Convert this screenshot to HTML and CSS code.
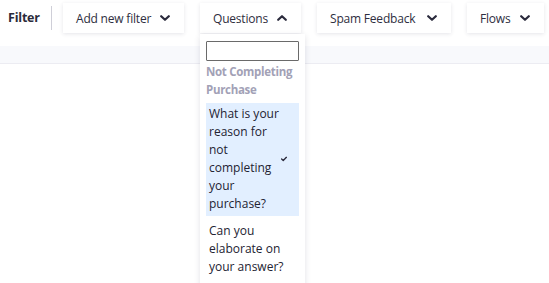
FILE: index.html
```html
<!DOCTYPE html>
<html>
<head>
<meta charset="utf-8">
<link rel="stylesheet" href="styles.css">
</head>
<body>
<div class="page">
  <div class="toolbar">
    <span class="label">Filter</span>
    <span class="divider"></span>
    <div class="btn w1"><span>Add new filter</span><svg class="chev" viewBox="0 0 10 6"><path d="M1.2 1.2 L5 4.8 L8.8 1.2"/></svg></div>
    <div class="btn w2 open"><span>Questions</span><svg class="chev" viewBox="0 0 10 6"><path d="M1.2 4.8 L5 1.2 L8.8 4.8"/></svg>
      <div class="menu">
        <input class="search" type="text">
        <div class="group">Not Completing Purchase</div>
        <div class="item selected"><span class="txt">What is your reason for not completing your purchase?</span><svg class="check" viewBox="0 0 8 6"><path d="M0.8 3 L3 5 L7.2 0.8"/></svg></div>
        <div class="item plain"><span class="txt">Can you elaborate on your answer?</span></div>
      </div>
    </div>
    <div class="btn w3"><span>Spam Feedback</span><svg class="chev" viewBox="0 0 10 6"><path d="M1.2 1.2 L5 4.8 L8.8 1.2"/></svg></div>
    <div class="btn w4"><span>Flows</span><svg class="chev" viewBox="0 0 10 6"><path d="M1.2 1.2 L5 4.8 L8.8 1.2"/></svg></div>
  </div>
  <div class="band"></div>
</div>
</body>
</html>
```
FILE: styles.css
```css
* { box-sizing: border-box; }
html, body { margin: 0; padding: 0; background: #fff; }
body { font-family: "Open Sans", "Liberation Sans", sans-serif; color: #2a2a3c; font-size: 12px; }
.page { width: 549px; height: 283px; overflow: hidden; }
.toolbar { display: flex; align-items: flex-start; padding: 3px 0 0 8px; height: 46px; }
.label { width: 43px; flex: 0 0 43px; font-weight: 700; font-size: 12.5px; line-height: 30px; color: #2b2b3a; letter-spacing: -0.2px; }
.divider { width: 1px; flex: 0 0 1px; height: 24px; background: #cfcfd8; margin: 3px 11px 0 0; }
.btn { position: relative; flex: 0 0 auto; height: 30px; background: #fff; box-shadow: 0 1px 4px rgba(40,40,70,0.12); display: flex; align-items: center; justify-content: space-between; padding: 0 14px 0 13px; margin-right: 16px; font-size: 12px; color: #2e2e40; letter-spacing: -0.2px; }
.w1 { width: 121px; }
.w2 { width: 101px; }
.w3 { width: 134px; }
.w4 { width: 77px; margin-right: 0; }
.chev { width: 10px; height: 6px; fill: none; stroke: #2a2a3c; stroke-width: 2.2; stroke-linecap: round; stroke-linejoin: round; }
.menu { position: absolute; left: 0; top: 31px; width: 105px; height: 260px; background: #fff; box-shadow: 0 2px 6px rgba(40,40,70,0.14); padding: 7px 6px 0 6px; z-index: 2; letter-spacing: 0; }
.search { display: block; width: 93px; height: 20px; border: 1.5px solid #6a6a6a; border-radius: 1px; margin: 0; padding: 0; background: #fff; }
.group { font-weight: 700; color: #a2a1b6; line-height: 18px; margin-top: 2px; font-size: 11.5px; letter-spacing: -0.3px; width: 93px; }
.item { display: flex; align-items: center; justify-content: space-between; line-height: 18px; padding: 2px 12px 3px 3px; color: #232332; }
.item .txt { width: 72px; flex: 0 0 72px; }
.item.plain .txt { width: 82px; flex: 0 0 82px; }
.item.selected { background: #e2efff; margin-top: 4px; }
.item + .item { padding-top: 6px; }
.check { width: 7px; height: 6px; fill: none; stroke: #2a2a3c; stroke-width: 1.8; stroke-linecap: round; stroke-linejoin: round; }
.band { height: 18px; background: #f8f9fc; border-bottom: 1px solid #ececf2; }
```
